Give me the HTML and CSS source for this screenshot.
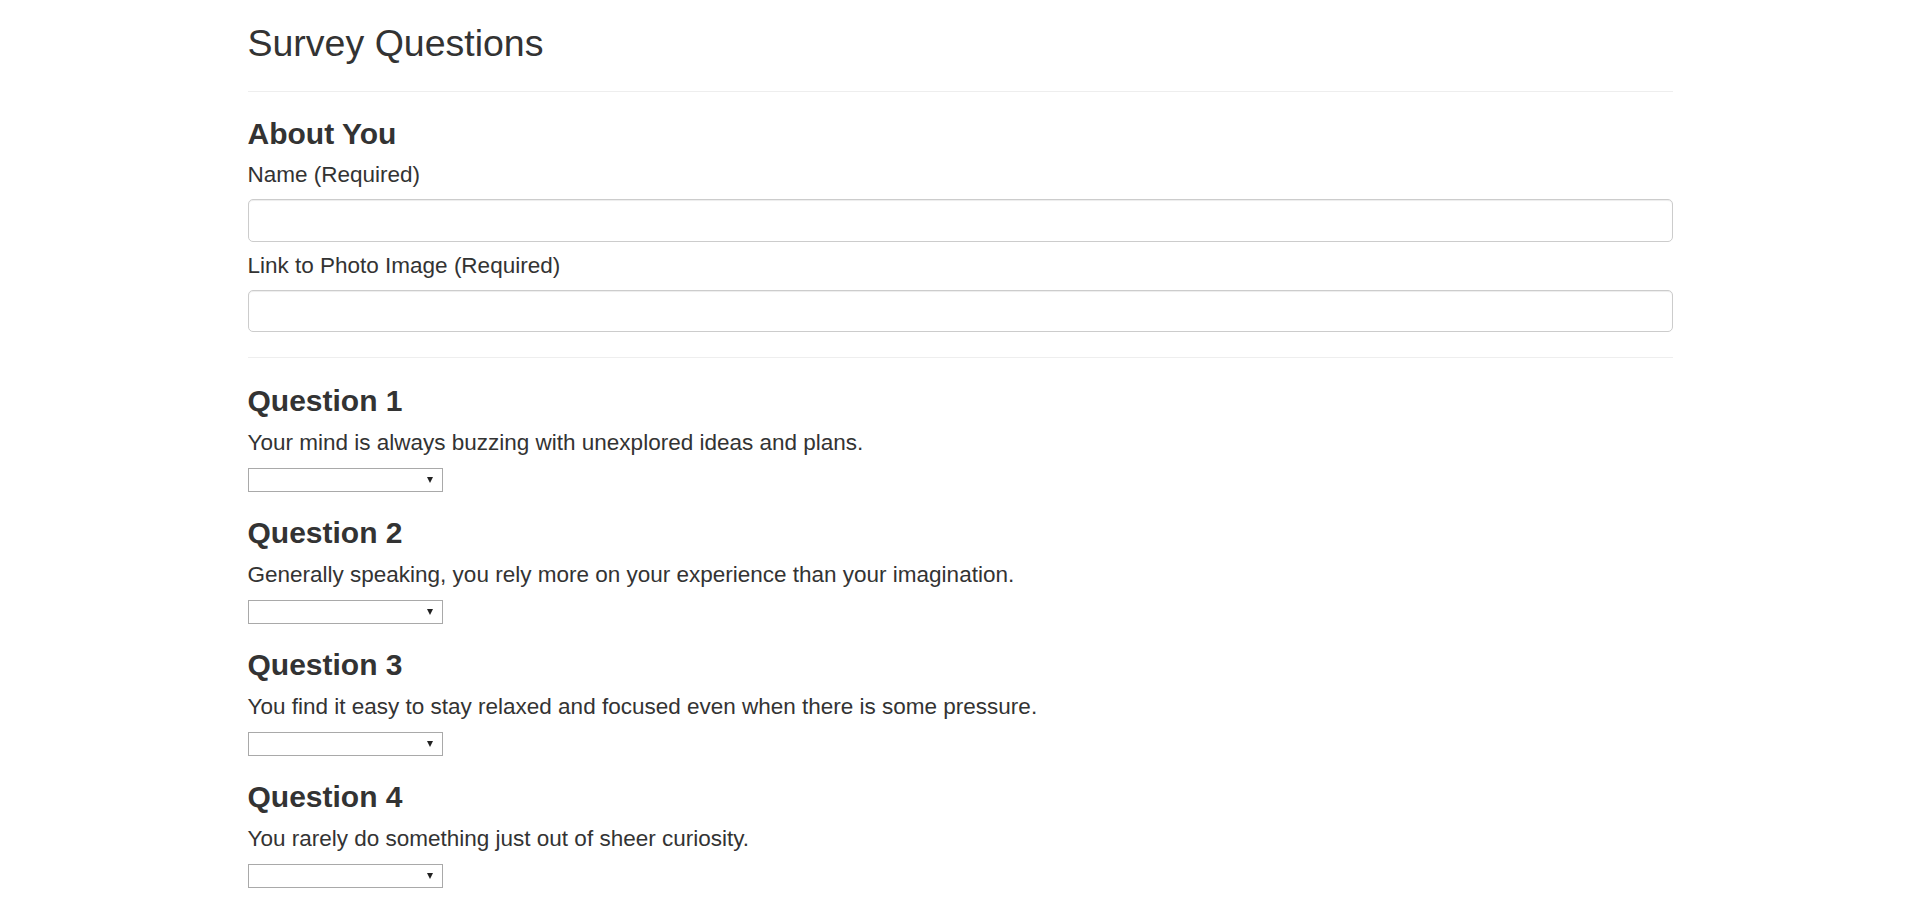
FILE: index.html
```html
<!DOCTYPE html>
<html lang="en">
<head>
<meta charset="utf-8">
<title>Survey Questions</title>
<link rel="stylesheet" href="styles.css">
</head>
<body>
<div class="container">
  <h2 class="page-title">Survey Questions</h2>
  <hr class="divider divider-top">
  <form class="survey">
    <section class="about">
      <h3 class="section-title">About You</h3>
      <label class="field-label" for="name">Name (Required)</label>
      <input class="form-control" id="name" type="text">
      <label class="field-label field-label-next" for="photo">Link to Photo Image (Required)</label>
      <input class="form-control" id="photo" type="text">
    </section>
    <hr class="divider divider-mid">
    <div class="questions">
      <section class="question">
        <h3 class="section-title">Question 1</h3>
        <p class="question-text">Your mind is always buzzing with unexplored ideas and plans.</p>
        <div class="select-wrap"><select class="answer"><option></option><option>1 (Strongly Disagree)</option><option>2</option><option>3</option><option>4</option><option>5 (Strongly Agree)</option></select></div>
      </section>
      <section class="question">
        <h3 class="section-title">Question 2</h3>
        <p class="question-text">Generally speaking, you rely more on your experience than your imagination.</p>
        <div class="select-wrap"><select class="answer"><option></option><option>1 (Strongly Disagree)</option><option>2</option><option>3</option><option>4</option><option>5 (Strongly Agree)</option></select></div>
      </section>
      <section class="question">
        <h3 class="section-title">Question 3</h3>
        <p class="question-text">You find it easy to stay relaxed and focused even when there is some pressure.</p>
        <div class="select-wrap"><select class="answer"><option></option><option>1 (Strongly Disagree)</option><option>2</option><option>3</option><option>4</option><option>5 (Strongly Agree)</option></select></div>
      </section>
      <section class="question">
        <h3 class="section-title">Question 4</h3>
        <p class="question-text">You rarely do something just out of sheer curiosity.</p>
        <div class="select-wrap"><select class="answer"><option></option><option>1 (Strongly Disagree)</option><option>2</option><option>3</option><option>4</option><option>5 (Strongly Agree)</option></select></div>
      </section>
    </div>
  </form>
</div>
</body>
</html>
```

FILE: styles.css
```css
* {
  box-sizing: border-box;
}

html, body {
  margin: 0;
  padding: 0;
  background: #ffffff;
}

body {
  font-family: "Liberation Sans", Arial, Helvetica, sans-serif;
  color: #333333;
  font-size: 22.5px;
  line-height: 32px;
}

.container {
  max-width: 1425px;
  margin: 0 auto;
}

.page-title {
  margin: 23px 0 0;
  font-size: 37.5px;
  line-height: 41px;
  font-weight: 500;
}

.divider {
  border: 0;
  border-top: 1px solid #eeeeee;
  margin: 0;
}

.divider-top {
  margin-top: 27px;
}

.divider-mid {
  margin-top: 25px;
}

.survey {
  display: block;
}

.about {
  display: flex;
  flex-direction: column;
  margin-top: 25px;
}

.section-title {
  margin: 0;
  font-size: 30px;
  line-height: 33px;
  font-weight: 700;
}

.field-label {
  display: block;
  margin-top: 9px;
  font-weight: 400;
  font-size: 22.5px;
  line-height: 32px;
}

.field-label-next {
  margin-top: 8px;
}

.form-control {
  display: block;
  width: 100%;
  height: 42.5px;
  margin-top: 8px;
  padding: 7px 15px;
  font: inherit;
  color: #555555;
  background: #ffffff;
  border: 1px solid #cccccc;
  border-radius: 5px;
  box-shadow: inset 0 1px 1px rgba(0, 0, 0, 0.075);
}

.questions {
  display: flex;
  flex-direction: column;
  gap: 24px;
  padding-top: 26px;
}

.question {
  display: flex;
  flex-direction: column;
  align-items: flex-start;
}

.question-text {
  margin: 10px 0 0;
  font-size: 22.5px;
  line-height: 32px;
}

.select-wrap {
  position: relative;
  margin-top: 9px;
  width: 195px;
  height: 24px;
}

.answer {
  display: block;
  width: 100%;
  height: 24px;
  margin: 0;
  padding: 0 4px;
  -webkit-appearance: none;
  appearance: none;
  background: #ffffff;
  border: 1px solid #a9a9a9;
  border-radius: 0;
  font-family: "Liberation Sans", Arial, sans-serif;
  font-size: 16px;
  color: #000000;
}

.select-wrap::after {
  content: "";
  position: absolute;
  right: 10px;
  top: 9px;
  width: 0;
  height: 0;
  border-left: 3.5px solid transparent;
  border-right: 3.5px solid transparent;
  border-top: 6px solid #222222;
  pointer-events: none;
}
```
